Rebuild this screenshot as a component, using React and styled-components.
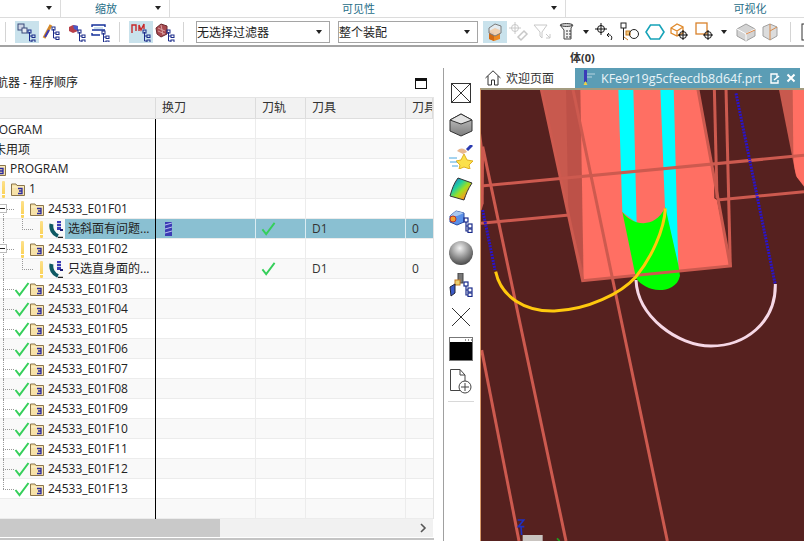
import React from 'react'
import styled, { createGlobalStyle } from 'styled-components'

const Global = createGlobalStyle`
  html, body { margin: 0; padding: 0; background: #fff; overflow: hidden; }
  * { box-sizing: border-box; }
`

const FONT = `"Open Sans", "Noto Sans CJK SC", sans-serif`

const Page = styled.div`
  width: 804px;
  height: 541px;
  overflow: hidden;
  display: flex;
  flex-direction: column;
  font-family: ${FONT};
  font-size: 12px;
  color: #222;
  background: #fff;
`

const RibbonBar = styled.div`
  height: 18px;
  display: flex;
  border-bottom: 1px solid #dcdcdc;
`
const RibbonGroup = styled.div`
  width: ${p => p.$w}px;
  flex: none;
  position: relative;
  padding: 0 ${p => (p.$last ? 0 : 18)}px 2px 0;
  display: flex;
  align-items: center;
  justify-content: center;
  color: #1f6e88;
  font-size: 11px;
  border-right: ${p => (p.$last ? 'none' : '1px solid #dcdcdc')};
`
const GroupCaret = styled.span`
  position: absolute;
  right: 8px;
  top: 6px;
  border: 3px solid transparent;
  border-top: 4px solid #222;
  border-bottom: none;
`

const Toolbar = styled.div`
  height: 29px;
  display: flex;
  align-items: center;
  border-bottom: 2px solid #a3a3a3;
`
const ToolButton = styled.div`
  width: ${p => p.$w || 24}px;
  height: 22px;
  flex: none;
  display: flex;
  align-items: center;
  justify-content: center;
  background: ${p => (p.$on ? '#c9e2ec' : 'transparent')};
  svg { display: block; }
`
const ToolSep = styled.div`
  width: 1px;
  height: 20px;
  flex: none;
  background: #d4d4d4;
  margin: 0 ${p => p.$r ?? 9}px 0 ${p => p.$l ?? 9}px;
`
const Caret = styled.span`
  width: 0;
  flex: none;
  margin: 0 ${p => p.$r || 0}px 0 ${p => p.$l || 0}px;
  border: 3px solid transparent;
  border-top: 4px solid #222;
  border-bottom: none;
`
const Select = styled.div`
  width: ${p => p.$w}px;
  height: 22px;
  flex: none;
  margin-right: ${p => p.$mr || 0}px;
  border: 1px solid #a5a5a5;
  display: flex;
  align-items: center;
  justify-content: space-between;
  padding: 0 7px 0 0;
  font-size: 12px;
  color: #222;
  background: #fff;
`

const BodyLabel = styled.div`
  height: 21px;
  padding: 3px 0 0 570px;
  font-size: 11px;
  font-weight: 700;
  line-height: 15px;
  color: #333;
`

const Main = styled.div`
  flex: 1;
  min-height: 0;
  display: flex;
`
const LeftPanel = styled.div`
  width: 444px;
  flex: none;
  border-right: 1px solid #a0a0a0;
  display: flex;
  flex-direction: column;
`
const PanelTitle = styled.div`
  height: 29px;
  padding: 6px 7px 0 0;
  width: 434px;
  display: flex;
  justify-content: space-between;
  align-items: flex-start;
  overflow: hidden;
  line-height: 18px;
  font-size: 12px;
  span { margin-left: -16px; }
`
const MaxIcon = styled.div`
  width: 12px;
  height: 11px;
  margin-top: 4px;
  border: 1px solid #111;
  border-top: 3px solid #111;
`
const Table = styled.div`
  width: 434px;
  border: 1px solid #e4e4e4;
  border-width: 1px 1px 0 0;
  overflow: hidden;
`
const Row = styled.div`
  height: 20px;
  display: grid;
  grid-template-columns: 156px 100px 50px 100px 27px;
  background: ${p => (p.$alt ? '#f9f9f9' : '#fff')};
  border-bottom: 1px solid #ececec;
`
const HeadRow = styled(Row)`
  height: 21px;
  background: #f2f2f2;
  border-bottom: 1px solid #dedede;
`
const HeadCell = styled.div`
  padding-left: 6px;
  line-height: 20px;
  white-space: nowrap;
  overflow: hidden;
  font-size: 12px;
  color: #333;
  border-right: 1px solid #dcdcdc;
`
const Cell = styled.div`
  display: flex;
  align-items: center;
  padding-left: ${p => p.$pad ?? 6}px;
  border-right: 1px solid ${p => (p.$sel ? '#dbecf2' : '#ececec')};
  background: ${p => (p.$sel ? '#8ac0d2' : 'transparent')};
  color: #333;
  &:last-child { border-right: none; }
`
const NameCell = styled.div`
  position: relative;
  display: flex;
  align-items: center;
  white-space: nowrap;
  overflow: hidden;
  border-right: 1px solid #000;
  margin-bottom: -1px;
  ${p => p.$trunk && `&::before {
    content: '';
    position: absolute;
    left: 3px;
    top: ${p.$trunk === 'start' ? '10px' : '0'};
    bottom: ${p.$trunk === 'end' ? '10px' : '0'};
    border-left: 1px dotted #999;
  }`}
  ${p => p.$stub && `&::after {
    content: '';
    position: absolute;
    left: ${p.$stub === 'op' ? 22 : 3}px;
    width: ${p.$stub === 'op' ? 10 : 11}px;
    top: ${p.$stub === 'op' ? -1 : 10}px;
    height: ${p.$stub === 'op' ? 11 : 0}px;
    border-left: ${p.$stub === 'op' ? '1px dotted #999' : 'none'};
    border-bottom: 1px dotted #999;
  }`}
`
const Expander = styled.span`
  position: absolute;
  left: -2px;
  top: 5px;
  width: 9px;
  height: 9px;
  background: #fff;
  border: 1px solid #bbb;
  z-index: 1;
  &::after {
    content: '';
    position: absolute;
    left: 1px;
    right: 1px;
    top: 3px;
    height: 1px;
    background: #222;
  }
`
const TreeLine = styled.div`
  margin-left: ${p => p.$indent}px;
  display: flex;
  align-items: center;
  align-self: stretch;
  flex: 1;
  min-width: 0;
`
const StatusSlot = styled.span`
  width: 16px;
  flex: none;
  display: flex;
  justify-content: center;
  z-index: 1;
`
const AlertBar = styled.span`
  width: 3px;
  height: 17px;
  background: linear-gradient(#fde08a, #fbd45e 75%, #fff 78%, #fff 82%, #fbd45e 84%);
  border-radius: 1px;
`
const NodeLabel = styled.span`
  flex: 1;
  align-self: stretch;
  margin-left: ${p => (p.$op ? 1 : 4)}px;
  padding-left: ${p => (p.$op ? 3 : 0)}px;
  line-height: 19px;
  background: ${p => (p.$sel ? '#8ac0d2' : 'transparent')};
  color: #222;
`
const PlainLabel = styled.span`
  margin-left: ${p => p.$x}px;
  line-height: 19px;
`
const ScrollBar = styled.div`
  width: 433px;
  height: 18px;
  background: #f1f1f1;
  display: flex;
  align-items: center;
  justify-content: space-between;
  padding-right: 6px;
`
const Thumb = styled.div`
  width: 220px;
  height: 18px;
  background: #c9c9c9;
`
const PanelFoot = styled.div`
  width: 434px;
  margin-top: 1px;
  height: 2px;
  background: #c4c4c4;
`

const IconRail = styled.div`
  width: 36px;
  flex: none;
  display: flex;
  flex-direction: column;
  align-items: center;
  padding: 9px 2px 0 0;
`
const RailSlot = styled.div`
  height: ${p => p.$h || 32}px;
  flex: none;
  display: flex;
  align-items: center;
  justify-content: center;
`
const RailSep = styled.div`
  width: 26px;
  height: 1px;
  margin-top: 4px;
  background: #d8d8d8;
`

const Workspace = styled.div`
  flex: 1;
  min-width: 0;
  display: flex;
  flex-direction: column;
`
const TabStrip = styled.div`
  height: 20px;
  flex: none;
  display: flex;
  align-items: stretch;
`
const HomeTab = styled.div`
  width: 95px;
  flex: none;
  display: flex;
  align-items: center;
  padding-left: 5px;
  gap: 5px;
  font-size: 12px;
  color: #333;
`
const ActiveTab = styled.div`
  width: 225px;
  flex: none;
  display: flex;
  align-items: center;
  padding-left: 5px;
  background: #5b9db5;
  color: #e9f4f8;
  font-size: 12.5px;
`
const TabName = styled.span`
  margin: 0 8px 0 5px;
  white-space: nowrap;
`
const Viewport = styled.div`
  flex: 1;
  min-height: 0;
  background: #56211f;
  border-top: 2px solid #a39c80;
  border-left: 1px solid #d99a6a;
  svg { display: block; }
`

const Check = ({ size = 16 }) => (
  <svg width={size} height={size} viewBox="0 0 16 16">
    <path d="M1.5 9 L5.5 14 L14.5 2" fill="none" stroke="#35cf5a" strokeWidth="2" />
  </svg>
)

const Folder = () => (
  <svg width="14" height="14" viewBox="0 0 14 14" style={{ flex: 'none' }}>
    <path d="M.5 2 H5 L6 3.5 H13.5 V13.5 H.5 Z" fill="#f7e2a8" stroke="#8a744a" />
    <path d="M1 5 H13" stroke="#fff4cf" />
    <path d="M7 6.5 H11 V11.5 H7 M8 9 H11" fill="none" stroke="#2a2aa0" strokeWidth="1.3" />
  </svg>
)

const OpIcon = () => (
  <svg width="15" height="18" viewBox="0 0 15 18" style={{ flex: 'none' }}>
    <path d="M2.5 4 C1.5 9 4 14 9 16" fill="none" stroke="#0f5a63" strokeWidth="4" />
    <path d="M9 17.5 L14 17.5" stroke="#222" strokeWidth="1.5" />
    <rect x="8" y="1" width="4" height="9" fill="#3a3ab8" />
    <path d="M8 3.5 H12 M8 6.5 H12" stroke="#ccd" />
    <rect x="11" y="9" width="3" height="2" fill="#1a1a70" />
  </svg>
)

const MillIcon = () => (
  <svg width="7" height="14" viewBox="0 0 7 14">
    <rect width="7" height="14" fill="#3c3cb4" />
    <path d="M0 3 L7 1 M0 7 L7 5 M0 11 L7 9" stroke="#b9c0ef" />
  </svg>
)

// small tree tail shared by the navigator toolbar icons
const TreeTail = ({ x = 10, y = 7, c = '#1a2b8a' }) => (
  <g fill="none" stroke={c}>
    <path d={`M${x + 1.5} ${y} V${y + 9} M${x + 1.5} ${y + 4} H${x + 4} M${x + 1.5} ${y + 9} H${x + 4}`} />
    <rect x={x} y={y - 2} width="3" height="3" />
    <rect x={x + 4} y={y + 3} width="3" height="2.5" />
    <rect x={x + 4} y={y + 8} width="3" height="2.5" />
  </g>
)

const Svg = ({ w = 20, h = 20, children }) => <svg width={w} height={h} viewBox={`0 0 ${w} ${h}`}>{children}</svg>

const TOOLS = {
  geom: (
    <Svg>
      <rect x="1" y="2" width="6" height="6" fill="#cfd6e6" stroke="#3a4a7a" />
      <rect x="5" y="6" width="5" height="5" fill="#e6eaf2" stroke="#3a4a7a" />
      <TreeTail x={11} y={10} />
    </Svg>
  ),
  mcs: (
    <Svg>
      <path d="M2 16 L9 3" stroke="#d58a2a" strokeWidth="3" />
      <path d="M3 15 L7 8" stroke="#3a3ab8" strokeWidth="2" />
      <TreeTail x={10} y={7} />
    </Svg>
  ),
  part: (
    <Svg>
      <path d="M2 5 L6 3 L11 4 V9 L6 11 L2 9 Z" fill="#b8404a" />
      <path d="M6 3 L11 4 V9 L7 7 Z" fill="#4a5ac8" />
      <TreeTail x={11} y={10} />
    </Svg>
  ),
  method: (
    <Svg>
      <path d="M1 5 V3 H14 V5 M1 8 H14 M1 11 V13 H9" fill="none" stroke="#14309a" strokeWidth="1.4" />
      <path d="M3 6 H12" stroke="#9cc4e0" />
      <TreeTail x={11} y={11} />
    </Svg>
  ),
  path: (
    <Svg>
      <path d="M1 11 V3 H5 V9 M8 9 V3 L10 8 L13 2 V7" fill="none" stroke="#c8282a" strokeWidth="1.4" />
      <TreeTail x={12} y={10} />
    </Svg>
  ),
  solid: (
    <Svg>
      <path d="M1 6 L6 2 L12 4 V12 L6 15 L2 12 Z" fill="#a84a50" stroke="#6a2a30" />
      <path d="M3 6 L10 9 M3 9 L10 12 M6 3 L8 13" stroke="#d8a0a0" />
      <TreeTail x={12} y={10} />
    </Svg>
  ),
  cube: (
    <Svg>
      <path d="M4 9 L10 6 L15 8 V17 L9 19 L4 17 Z" fill="#ed8a24" />
      <path d="M4 9 L9 11 V19 L4 17 Z" fill="#d26a14" />
      <path d="M4 6 L10 2 L16 4 V11 L10 14 L4 11 Z" fill="#eef0f2" fillOpacity=".7" stroke="#7a7a7a" />
    </Svg>
  ),
  linkOff: (
    <Svg>
      <circle cx="6" cy="6" r="3.5" fill="none" stroke="#c8c8c8" />
      <path d="M6 0 V12 M0 6 H12" stroke="#c8c8c8" />
      <path d="M9 15 L15 9 L18 12 L12 18 Z" fill="none" stroke="#c8c8c8" strokeWidth="1.5" />
    </Svg>
  ),
  funnelOff: (
    <Svg>
      <path d="M1 3 H14 L9 10 V16 L7 14 V10 Z" fill="none" stroke="#c8c8c8" />
      <path d="M13 12 L17 16 M17 12 V16 H13" fill="none" stroke="#c8c8c8" />
    </Svg>
  ),
  funnel: (
    <Svg>
      <path d="M1 3 H14 L12 6 V17 H5 V8 Z" fill="#f2f2f2" stroke="#444" />
      <path d="M7 9 H9 M10 9 H12 M7 12 H9 M10 12 H12 M7 15 H9 M10 15 H12" stroke="#333" />
      <ellipse cx="7.5" cy="3" rx="6" ry="1.5" fill="#ccc" stroke="#444" />
    </Svg>
  ),
  snapBack: (
    <Svg>
      <circle cx="6" cy="7" r="3.5" fill="none" stroke="#111" />
      <path d="M6 1 V13 M0 7 H12" stroke="#111" />
      <path d="M12 13 C16 12 18 15 16 18 M12 13 L14 11 M12 13 L14 15" fill="none" stroke="#111" />
    </Svg>
  ),
  treeCircle: (
    <Svg>
      <rect x="1" y="1" width="5" height="5" fill="none" stroke="#222" />
      <path d="M3.5 6 V18" stroke="#222" />
      <rect x="6" y="9" width="4" height="4" fill="#f2c67a" stroke="#c87a20" />
      <circle cx="14" cy="12" r="4.5" fill="none" stroke="#222" />
      <path d="M4 15 L8 18" stroke="#c87a20" />
    </Svg>
  ),
  hexagon: (
    <Svg>
      <path d="M5.5 3 H14.5 L19 10 L14.5 17 H5.5 L1 10 Z" fill="none" stroke="#16a3b8" strokeWidth="1.6" />
    </Svg>
  ),
  cubeSnap: (
    <Svg>
      <path d="M1 6 L7 2 L13 5 V11 L7 14 L1 11 Z M1 6 L7 9 L13 5 M7 9 V14" fill="none" stroke="#e08a2c" strokeWidth="1.3" />
      <circle cx="13" cy="13" r="3.5" fill="none" stroke="#111" />
      <path d="M13 8 V18 M8 13 H18" stroke="#111" />
    </Svg>
  ),
  squareSnap: (
    <Svg>
      <rect x="1" y="1" width="11" height="11" fill="none" stroke="#d9822b" strokeWidth="1.3" />
      <circle cx="13" cy="13" r="3.5" fill="none" stroke="#111" />
      <path d="M13 8 V18 M8 13 H18" stroke="#111" />
    </Svg>
  ),
  grayCube: (
    <Svg>
      <path d="M1 7 L10 2 L19 7 V14 L10 19 L1 14 Z" fill="#d4d4d4" stroke="#a0a0a0" />
      <path d="M1 7 L10 12 L19 7 M10 12 V19" fill="none" stroke="#fff" />
      <path d="M10 12 L19 8" stroke="#e08a4a" />
    </Svg>
  ),
  wireCube: (
    <Svg>
      <path d="M2 5 L9 2 L16 5 V14 L9 18 L2 14 Z" fill="#dcdcdc" stroke="#a0a0a0" />
      <path d="M9 2 V18 M9 9 L16 5" fill="none" stroke="#d88a4a" />
    </Svg>
  ),
  cutOff: (
    <Svg>
      <rect x="9" y="2" width="9" height="16" fill="none" stroke="#333" />
    </Svg>
  ),
}

const Rail = {
  boxX: (
    <svg width="20" height="20" viewBox="0 0 20 20">
      <rect x=".5" y=".5" width="19" height="19" fill="#fff" stroke="#333" />
      <path d="M1 1 L19 19 M19 1 L1 19" stroke="#333" />
    </svg>
  ),
  cube: (
    <svg width="24" height="24" viewBox="0 0 24 24">
      <defs>
        <linearGradient id="cg" x1="0" y1="0" x2="0" y2="1">
          <stop offset="0" stopColor="#c9c9c9" />
          <stop offset="1" stopColor="#7c7c7c" />
        </linearGradient>
      </defs>
      <path d="M1 7 L12 1 L23 7 V18 L12 23 L1 18 Z" fill="url(#cg)" stroke="#333" />
      <path d="M1 7 L12 11 L23 7 L12 1 Z" fill="#e2e2e2" stroke="#333" />
    </svg>
  ),
  star: (
    <svg width="24" height="24" viewBox="0 0 24 24">
      <path d="M15 9 L18 15 L24 16 L20 20 L21 24 L15 22 L10 24 L11 20 L7 16 L12 15 Z" fill="#fbe04a" stroke="#e0b020" />
      <path d="M8 6 C11 2 16 3 18 7 L14 9 Z" fill="#e8b890" />
      <path d="M18 5 L23 0" stroke="#2a3ab0" strokeWidth="3" />
      <path d="M0 13 H8 M1 17 H8 M3 21 H9" stroke="#4aa8e0" />
    </svg>
  ),
  rainbow: (
    <svg width="24" height="24" viewBox="0 0 24 24">
      <defs>
        <linearGradient id="rb" x1="0" y1="0" x2="1" y2="1">
          <stop offset="0" stopColor="#3050e0" />
          <stop offset=".35" stopColor="#20d0a0" />
          <stop offset=".55" stopColor="#a0e020" />
          <stop offset=".75" stopColor="#f0a020" />
          <stop offset="1" stopColor="#e03030" />
        </linearGradient>
      </defs>
      <path d="M9 1 L23 6 C19 12 17 17 15 23 L1 19 C3 12 5 6 9 1 Z" fill="url(#rb)" stroke="#333" />
    </svg>
  ),
  boxTree: (
    <svg width="24" height="24" viewBox="0 0 24 24">
      <path d="M1 7 L7 2 L15 4 V13 L8 16 L1 13 Z" fill="#5a90e8" stroke="#2a4aa0" />
      <path d="M7 2 L15 4 L8 7 L1 7 Z" fill="#a8c8f0" />
      <circle cx="4" cy="10" r="3" fill="#f0a030" stroke="#c03020" />
      <g fill="none" stroke="#1a2b8a" strokeWidth="1.2">
        <rect x="15" y="9" width="4" height="4" />
        <path d="M17 13 V22 H19 M17 17 H19" />
        <rect x="19" y="15" width="4" height="4" />
        <rect x="19" y="20" width="4" height="3.5" />
      </g>
    </svg>
  ),
  sphere: (
    <svg width="24" height="24" viewBox="0 0 24 24">
      <defs>
        <radialGradient id="sp" cx=".45" cy=".3" r=".75">
          <stop offset="0" stopColor="#f2f2f2" />
          <stop offset=".55" stopColor="#8e8e8e" />
          <stop offset="1" stopColor="#3e3e3e" />
        </radialGradient>
      </defs>
      <circle cx="12" cy="12" r="12" fill="url(#sp)" />
    </svg>
  ),
  toolTree: (
    <svg width="24" height="24" viewBox="0 0 24 24">
      <rect x="9" y="0" width="5" height="10" fill="#777" stroke="#444" />
      <rect x="6" y="7" width="5" height="5" fill="#e8d070" stroke="#c87a20" />
      <path d="M1 14 L6 11 L6 20 L2 23 Z" fill="#3a5ac8" stroke="#223" />
      <g fill="none" stroke="#1a2b8a" strokeWidth="1.2">
        <rect x="15" y="9" width="4" height="4" />
        <path d="M17 13 V22 H19 M17 17 H19" />
        <rect x="19" y="15" width="4" height="4" />
        <rect x="19" y="20" width="4" height="3.5" />
      </g>
    </svg>
  ),
  cross: (
    <svg width="20" height="20" viewBox="0 0 20 20">
      <path d="M1 1 L19 19 M19 1 L1 19" stroke="#333" />
    </svg>
  ),
  terminal: (
    <svg width="24" height="24" viewBox="0 0 24 24">
      <rect x=".5" y=".5" width="23" height="23" fill="#fff" stroke="#777" />
      <rect x="1" y="5" width="22" height="18" fill="#000" />
      <path d="M16 3 H17 M19 3 H20 M22 3 H23" stroke="#333" />
    </svg>
  ),
  newDoc: (
    <svg width="24" height="25" viewBox="0 0 24 25">
      <path d="M1.5 .5 H11 L16 6 V21.5 H1.5 Z M11 .5 V6 H16" fill="#fff" stroke="#444" />
      <circle cx="16" cy="18" r="6" fill="#fff" stroke="#444" />
      <path d="M16 14 V22 M12 18 H20" stroke="#444" />
    </svg>
  ),
}

const treeRows = [
  { plain: 'PROGRAM', x: -16 },
  { plain: '未用项', x: -6 },
  { level: 0, name: 'PROGRAM' },
  { level: 1, name: '1', status: 'alert' },
  { level: 2, name: '24533_E01F01', status: 'alert', expand: true, trunk: 'start', stub: 'node' },
  { level: 3, name: '选斜面有问题...', op: true, sel: true, trunk: 'mid', stub: 'op', mill: true, track: true, tool: 'D1', count: '0' },
  { level: 2, name: '24533_E01F02', status: 'alert', expand: true, trunk: 'mid', stub: 'node' },
  { level: 3, name: '只选直身面的...', op: true, trunk: 'mid', stub: 'op', track: true, tool: 'D1', count: '0' },
  ...['03', '04', '05', '06', '07', '08', '09', '10', '11', '12', '13'].map(n => ({
    level: 2,
    name: `24533_E01F${n}`,
    status: 'done',
    trunk: n === '13' ? 'end' : 'mid',
    stub: 'node',
  })),
  {},
]

const TreeRow = ({ row, alt }) => (
  <Row $alt={alt}>
    <NameCell $trunk={row.trunk} $stub={row.stub}>
      {row.expand && <Expander />}
      {row.plain && <PlainLabel $x={row.x}>{row.plain}</PlainLabel>}
      {row.name && (
        <TreeLine $indent={-24 + 19 * row.level}>
          <StatusSlot>
            {row.status === 'alert' || row.op ? <AlertBar /> : null}
            {row.status === 'done' ? <Check /> : null}
          </StatusSlot>
          {row.op ? <OpIcon /> : <Folder />}
          <NodeLabel $op={row.op} $sel={row.sel}>{row.name}</NodeLabel>
        </TreeLine>
      )}
    </NameCell>
    <Cell $sel={row.sel} $pad={9}>{row.mill && <MillIcon />}</Cell>
    <Cell $sel={row.sel} $pad={5}>{row.track && <Check size={15} />}</Cell>
    <Cell $sel={row.sel}>{row.tool}</Cell>
    <Cell $sel={row.sel}>{row.count}</Cell>
  </Row>
)

const WIRE = '#cd5a4f'

// the part in the graphics window, coordinates are 3x page pixels
const PartView = () => (
  <svg width="323" height="451" viewBox="0 0 969 1353">
    <path d="M180 -6 H300 L310 572 L305 572 Z" fill="#c8594e" />
    <path d="M255 -6 H300 L306 540 L262 370 Z" fill="#bd5148" />
    <path d="M298 -6 H652 L748 528 L308 572 Z" fill="#ff6f63" />
    <path d="M652 -6 H700 V325 L708 330 L748 528 Z" fill="#56211f" />
    <path d="M893 -6 H969 V290 L945 258 Z" fill="#c8594e" />
    <path d="M935 -6 H969 V288 L948 262 C940 240 938 220 937 190 Z" fill="#ff6f63" />
    <path d="M0 130 L9 200 L8 340 L0 365 Z" fill="#cd5a4f" />

    <path d="M412 -6 H457 L467 400 L424 366 Z" fill="#00ffff" />
    <path d="M538 -6 H578 L592 530 L552 354 Z" fill="#00ffff" />
    <path d="M424 365 C440 395 515 430 553 352 L592 525 L597 557 C590 590 560 600 535 600 C505 600 480 585 465 565 Z" fill="#00ff00" />

    <g stroke={WIRE} strokeWidth="9" fill="none">
      <path d="M180 -6 L305 572 L748 528 L650 -6" />
      <path d="M700 -6 L708 325" />
      <path d="M735 -6 L748 530" />
      <path d="M275 -6 L559 1353" />
      <path d="M5 170 L255 1353" />
      <path d="M2 780 L114 1353" />
      <path d="M0 288 L969 196" />
      <path d="M0 400 L265 375" />
      <path d="M708 330 L969 305" />
    </g>

    <path d="M44 545 C60 620 130 665 220 663 C320 660 420 610 465 560 C510 505 550 420 553 355" fill="none" stroke="#ffc90e" strokeWidth="9" />
    <path d="M465 570 C470 680 590 768 690 768 C790 768 885 700 883 582" fill="none" stroke="#f6d8e6" strokeWidth="9" />
    <path d="M765 10 L882 580" stroke="#2a14c8" strokeWidth="9" strokeDasharray="6 3" />
    <path d="M5 360 L42 540" stroke="#2a14c8" strokeWidth="9" strokeDasharray="6 3" />

    <path d="M110 1290 H128 L112 1310 H130 M120 1310 L122 1335" fill="none" stroke="#2030c0" strokeWidth="5" />
    <rect x="125" y="1335" width="60" height="24" fill="#c9c4c0" />
    <path d="M228 1345 L236 1353" stroke="#20a020" strokeWidth="5" />
  </svg>
)

const App = () => {
  return (
    <Page>
      <Global />
      <RibbonBar>
        <RibbonGroup $w={61}><GroupCaret /></RibbonGroup>
        <RibbonGroup $w={109}>缩放<GroupCaret /></RibbonGroup>
        <RibbonGroup $w={396}>可见性<GroupCaret /></RibbonGroup>
        <RibbonGroup $w={368} $last>可视化</RibbonGroup>
      </RibbonBar>
      <Toolbar>
        <ToolSep $l={5} />
        <ToolButton $on>{TOOLS.geom}</ToolButton>
        <ToolButton $w={26}>{TOOLS.mcs}</ToolButton>
        <ToolButton>{TOOLS.part}</ToolButton>
        <ToolButton>{TOOLS.method}</ToolButton>
        <ToolSep $l={6} />
        <ToolButton $on>{TOOLS.path}</ToolButton>
        <ToolButton>{TOOLS.solid}</ToolButton>
        <ToolSep $l={6} $r={12} />
        <Select $w={134} $mr={8}>无选择过滤器<Caret /></Select>
        <Select $w={140} $mr={5}>整个装配<Caret /></Select>
        <ToolButton $on>{TOOLS.cube}</ToolButton>
        <ToolButton>{TOOLS.linkOff}</ToolButton>
        <ToolButton>{TOOLS.funnelOff}</ToolButton>
        <ToolButton $w={28}>{TOOLS.funnel}</ToolButton>
        <Caret $r={4} />
        <ToolButton>{TOOLS.snapBack}</ToolButton>
        <ToolButton $w={26}>{TOOLS.treeCircle}</ToolButton>
        <ToolButton>{TOOLS.hexagon}</ToolButton>
        <ToolButton $w={26}>{TOOLS.cubeSnap}</ToolButton>
        <ToolButton $w={23}>{TOOLS.squareSnap}</ToolButton>
        <Caret $l={5} $r={4} />
        <ToolButton $w={30}>{TOOLS.grayCube}</ToolButton>
        <ToolButton $w={20}>{TOOLS.wireCube}</ToolButton>
        <ToolSep $l={9} $r={2} />
        <ToolButton $w={20}>{TOOLS.cutOff}</ToolButton>
      </Toolbar>
      <BodyLabel>体(0)</BodyLabel>
      <Main>
        <LeftPanel>
          <PanelTitle>
            <span>导航器 - 程序顺序</span>
            <MaxIcon />
          </PanelTitle>
          <Table>
            <HeadRow>
              <HeadCell />
              <HeadCell>换刀</HeadCell>
              <HeadCell>刀轨</HeadCell>
              <HeadCell>刀具</HeadCell>
              <HeadCell>刀具</HeadCell>
            </HeadRow>
            {treeRows.map((row, i) => (
              <TreeRow row={row} alt={i % 2 === 1} key={i} />
            ))}
          </Table>
          <ScrollBar>
            <Thumb />
            <svg width="8" height="10" viewBox="0 0 8 10">
              <path d="M2 1 L6 5 L2 9" fill="none" stroke="#555" strokeWidth="1.6" />
            </svg>
          </ScrollBar>
          <PanelFoot />
        </LeftPanel>
        <IconRail>
          <RailSlot>{Rail.boxX}</RailSlot>
          <RailSlot>{Rail.cube}</RailSlot>
          <RailSlot>{Rail.star}</RailSlot>
          <RailSlot>{Rail.rainbow}</RailSlot>
          <RailSlot>{Rail.boxTree}</RailSlot>
          <RailSlot>{Rail.sphere}</RailSlot>
          <RailSlot>{Rail.toolTree}</RailSlot>
          <RailSlot>{Rail.cross}</RailSlot>
          <RailSlot>{Rail.terminal}</RailSlot>
          <RailSlot>{Rail.newDoc}</RailSlot>
          <RailSep />
        </IconRail>
        <Workspace>
          <TabStrip>
            <HomeTab>
              <svg width="16" height="16" viewBox="0 0 16 16">
                <path d="M0.5 8 L8 .8 L15.5 8 M3 6 V15 H6.5 V10 H9.5 V15 H13 V6" fill="none" stroke="#333" />
              </svg>
              欢迎页面
            </HomeTab>
            <ActiveTab>
              <svg width="16" height="16" viewBox="0 0 16 16">
                <rect x="4" y="0" width="3" height="12" fill="#3a3ab8" />
                <path d="M7 4 H15 M7 7 H12" stroke="#b8d4e0" />
                <path d="M5.5 11 L7.5 15 H3.5 Z" fill="#f0d040" />
              </svg>
              <TabName>KFe9r19g5cfeecdb8d64f.prt</TabName>
              <svg width="10" height="11" viewBox="0 0 10 11">
                <path d="M7 4 V1 H1 V10 H8 V7" fill="none" stroke="#fff" strokeWidth="1.4" />
                <path d="M4 7 L9 3" stroke="#fff" strokeWidth="1.6" />
              </svg>
              <svg width="10" height="10" viewBox="0 0 10 10" style={{ marginLeft: 6 }}>
                <path d="M1.5 1.5 L8.5 8.5 M8.5 1.5 L1.5 8.5" stroke="#fff" strokeWidth="2" />
              </svg>
            </ActiveTab>
          </TabStrip>
          <Viewport>
            <PartView />
          </Viewport>
        </Workspace>
      </Main>
    </Page>
  )
}

export default App
